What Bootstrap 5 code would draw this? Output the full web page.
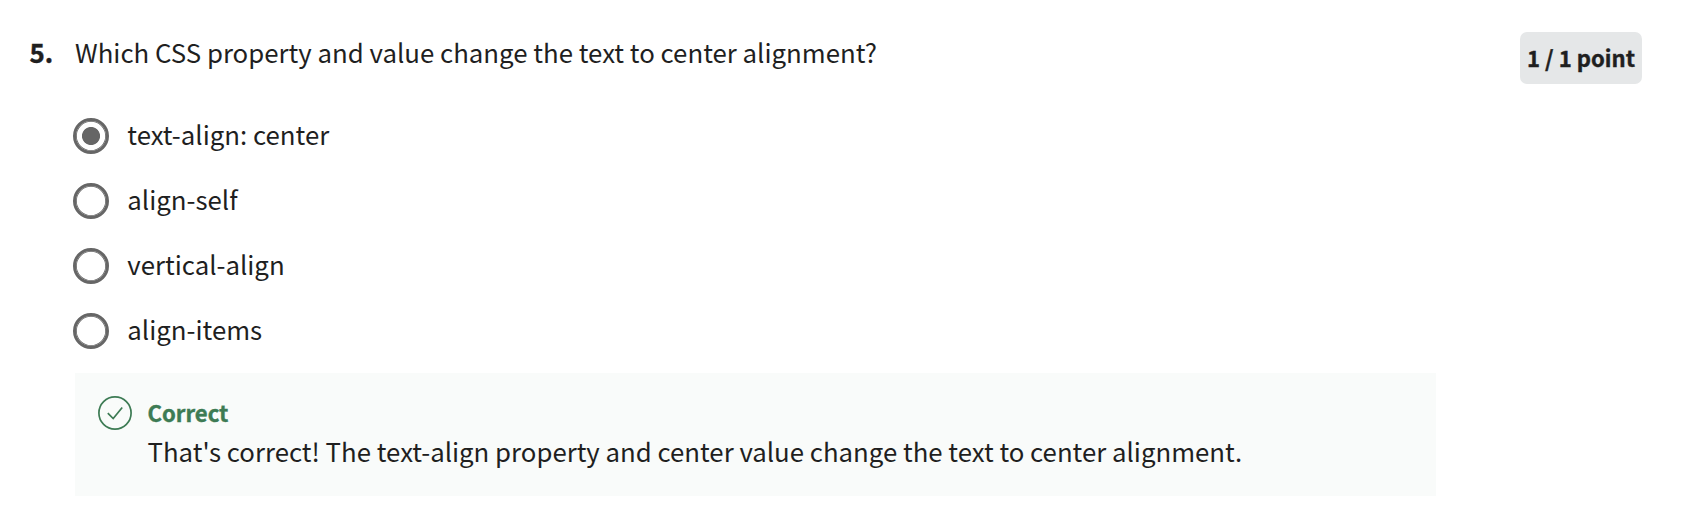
<!DOCTYPE html>
<html lang="en">
<head>
<meta charset="utf-8">
<meta name="viewport" content="width=device-width, initial-scale=1">
<title>Quiz question</title>
<link href="https://cdn.jsdelivr.net/npm/bootstrap@5.3.0/dist/css/bootstrap.min.css" rel="stylesheet">
<style>
  body { font-family: "Noto Sans CJK SC", "Noto Sans", sans-serif; font-size: 25.8px; line-height: 36px; color: #1f1f1f; background: #fff; }
  .fw-bold { -webkit-text-stroke: .4px currentColor; }
  .question { padding: 32px 54px 0 30px; }
  .q-number { width: 45px; padding-top: 2px; margin-left: -.5px; margin-right: .5px; }
  .q-title { padding-top: 2px; height: 85.5px; }
  .points { width: 122px; height: 52px; line-height: 50px; font-size: 22.1px; background: #e5e7e8; border-radius: 7px; }
  .options { gap: 29px; margin-left: -2px; }
  .option { height: 36px; gap: 18.3px; }
  .option .form-check-input { width: 36px; height: 36px; border: 3px solid #666; background-color: #fff; box-shadow: inset 0 0 0 .8px #666; }
  .option .form-check-input:checked { background-image: radial-gradient(circle, #666 8.6px, transparent 9.4px); background-size: auto; border-color: #666; }
  .option label { padding-bottom: 4px; }
  .feedback { width: 1361px; height: 123px; margin-top: 24.5px; padding: 23px; gap: 15.5px; background: #f9fbfa; }
  .feedback-title { color: #3d7b54; font-size: 22.1px; line-height: 32px; }
  .feedback-text { font-size: 25.78px; line-height: 42px; padding-top: 2px; }
</style>
</head>
<body>
<main class="question d-flex align-items-start">
  <div class="q-number fw-bold flex-shrink-0">5.</div>
  <section class="flex-grow-1">
    <div class="d-flex justify-content-between align-items-start">
      <div class="q-title"><span>Which CSS property and value change the text to center alignment?</span></div>
      <div class="points fw-bold text-center text-nowrap">1 / 1 point</div>
    </div>
    <div class="options d-flex flex-column">
      <div class="option d-flex align-items-center"><input class="form-check-input m-0" type="radio" name="answer" id="a1" checked><label for="a1">text-align: center</label></div>
      <div class="option d-flex align-items-center"><input class="form-check-input m-0" type="radio" name="answer" id="a2"><label for="a2">align-self</label></div>
      <div class="option d-flex align-items-center"><input class="form-check-input m-0" type="radio" name="answer" id="a3"><label for="a3">vertical-align</label></div>
      <div class="option d-flex align-items-center"><input class="form-check-input m-0" type="radio" name="answer" id="a4"><label for="a4">align-items</label></div>
    </div>
    <div class="feedback d-flex align-items-start">
      <svg class="flex-shrink-0" width="34" height="34" viewBox="0 0 34 34" fill="none" stroke="#3d7b54" stroke-width="1.7" aria-hidden="true"><circle cx="17" cy="17" r="16.1"/><path d="M9.8 17.2 L15.2 22.6 L24.2 11.5"/></svg>
      <div>
        <div class="feedback-title fw-bold">Correct</div>
        <div class="feedback-text text-nowrap">That's correct! The text-align property and center value change the text to center alignment.</div>
      </div>
    </div>
  </section>
</main>
<script src="https://cdn.jsdelivr.net/npm/bootstrap@5.3.0/dist/js/bootstrap.bundle.min.js"></script>
</body>
</html>
